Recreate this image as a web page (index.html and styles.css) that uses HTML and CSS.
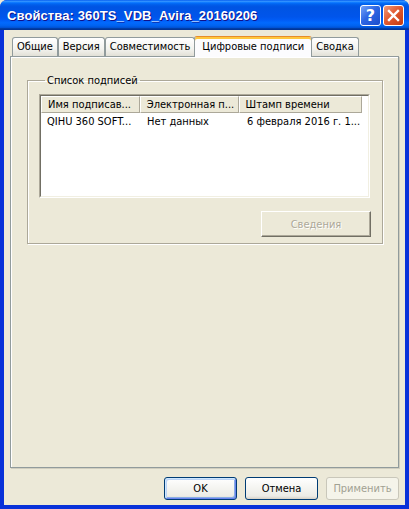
FILE: index.html
```html
<!DOCTYPE html>
<html lang="ru">
<head>
    <meta charset="UTF-8">
    <meta name="viewport" content="width=device-width, initial-scale=1.0">
    <title>Свойства: 360TS_VDB_Avira_20160206</title>
    <link rel="stylesheet" href="styles.css">
</head>
<body>
    <div class="window">
        <div class="titlebar">
            <span class="title">Свойства: 360TS_VDB_Avira_20160206</span>
            <div class="caption-buttons">
                <div class="cap-btn help">?</div>
                <div class="cap-btn close">
                    <svg width="13" height="13" viewBox="0 0 13 13">
                        <path d="M2 2 L11 11 M11 2 L2 11" stroke="#fff" stroke-width="2.4" stroke-linecap="square"/>
                    </svg>
                </div>
            </div>
        </div>
        <div class="frame">
            <div class="tabs">
                <div class="tab">Общие</div>
                <div class="tab">Версия</div>
                <div class="tab">Совместимость</div>
                <div class="tab active">Цифровые подписи</div>
                <div class="tab">Сводка</div>
            </div>
            <div class="panel">
                <fieldset class="group">
                    <legend>Список подписей</legend>
                    <div class="listview">
                        <div class="lv-inner">
                            <div class="lv-header">
                                <div class="col col1">Имя подписав...</div>
                                <div class="col col2">Электронная п...</div>
                                <div class="col col3">Штамп времени</div>
                                <div class="col filler"></div>
                            </div>
                            <div class="lv-row">
                                <div class="cell col1">QIHU 360 SOFT...</div>
                                <div class="cell col2">Нет данных</div>
                                <div class="cell col3">6 февраля 2016 г. 1...</div>
                            </div>
                        </div>
                    </div>
                    <div class="group-actions">
                        <button class="classic-btn" disabled>Сведения</button>
                    </div>
                </fieldset>
            </div>
            <div class="footer">
                <button class="xp-btn default">OK</button>
                <button class="xp-btn">Отмена</button>
                <button class="xp-btn" disabled>Применить</button>
            </div>
        </div>
    </div>
</body>
</html>
```

FILE: styles.css
```css
body {
    margin: 0;
    background: #ece9d8;
    font-family: "DejaVu Sans Condensed", "Liberation Sans", sans-serif;
    font-size: 11px;
    color: #000;
}
.window {
    width: 409px;
    height: 509px;
    display: flex;
    flex-direction: column;
    background: #0831d9;
    border-radius: 7px 7px 0 0;
    overflow: hidden;
}
.titlebar {
    height: 30px;
    flex-shrink: 0;
    display: flex;
    align-items: center;
    justify-content: space-between;
    padding: 0 5px 0 7px;
    box-sizing: border-box;
    background: linear-gradient(to bottom, #0058ee 0%, #3593ff 4%, #288eff 6%, #127dff 8%, #036ffc 10%, #0262ee 14%, #0057e5 20%, #0054e3 24%, #0055eb 56%, #005bf5 66%, #026afe 76%, #0062ef 86%, #0052d6 92%, #0040ab 94%, #003092 100%);
}
.title {
    color: #fff;
    font-family: "Liberation Sans", sans-serif;
    font-weight: bold;
    font-size: 13px;
    letter-spacing: 0.1px;
    text-shadow: 1px 1px #0f1089;
    padding-top: 1px;
}
.caption-buttons {
    display: flex;
    gap: 2px;
    padding-top: 1px;
}
.cap-btn {
    width: 19px;
    height: 19px;
    border: 1px solid #fff;
    border-radius: 3px;
    display: flex;
    align-items: center;
    justify-content: center;
    color: #fff;
}
.help {
    background: linear-gradient(135deg, #74a2f7 0%, #2d66e4 45%, #1c4ccb 100%);
    font-family: "DejaVu Sans", sans-serif;
    font-weight: bold;
    font-size: 16px;
}
.close {
    background: linear-gradient(135deg, #f09a7c 0%, #e25b32 45%, #c43a10 100%);
}
.frame {
    flex: 1;
    display: flex;
    flex-direction: column;
    background: #ece9d8;
    margin: 0 4px 4px;
    padding: 5px 6px 0 6px;
}
.tabs {
    display: flex;
    align-items: flex-end;
    height: 21px;
    padding-left: 2px;
}
.tab {
    height: 18px;
    line-height: 18px;
    padding: 0 4px;
    border: 1px solid #919b9c;
    border-bottom: none;
    border-radius: 3px 3px 0 0;
    background: linear-gradient(#fff, #f3f3ef 60%, #e2e0d6);
    white-space: nowrap;
}
.tab.active {
    height: 20px;
    line-height: 20px;
    padding: 0 7px;
    margin: 0 -1px -1px -1px;
    border-top: 1px solid #e68b2c;
    box-shadow: inset 0 2px #ffc73c;
    background: #fcfcfe;
    position: relative;
    z-index: 1;
}
.panel {
    flex: 1;
    border: 1px solid #919b9c;
    box-shadow: inset 1px 1px #fff, 1px 1px 0 #d0cebf;
    display: flex;
    flex-direction: column;
}
.group {
    box-sizing: border-box;
    width: 356px;
    margin: 17px 0 0 16px;
    padding: 7px 11px 6px 11px;
    border: 1px solid #aca899;
    box-shadow: inset 1px 1px #fff, 1px 1px #fff;
}
.group legend {
    padding: 0 2px;
    margin-left: 6px;
    line-height: 13px;
}
.listview {
    box-sizing: border-box;
    width: 331px;
    height: 104px;
    border: 1px solid;
    border-color: #aca899 #fff #fff #aca899;
}
.lv-inner {
    height: 100%;
    box-sizing: border-box;
    border: 1px solid;
    border-color: #716f64 #f1efe2 #f1efe2 #716f64;
    background: #fff;
}
.lv-header {
    display: flex;
    height: 17px;
}
.lv-header .col {
    box-sizing: border-box;
    line-height: 15px;
    padding-left: 6px;
    background: #ece9d8;
    border-top: 1px solid #fff;
    border-left: 1px solid #fff;
    border-bottom: 1px solid #aca899;
    border-right: 1px solid #aca899;
    white-space: nowrap;
    overflow: hidden;
}
.col1 { width: 100px; }
.col2 { width: 100px; }
.col3 { width: 125px; }
.lv-header .filler {
    flex: 1;
    background: #fff;
    border: none;
}
.lv-row {
    display: flex;
    height: 16px;
    line-height: 16px;
    margin-top: 1px;
}
.lv-row .cell {
    padding-left: 6px;
    box-sizing: border-box;
    white-space: nowrap;
}
.group-actions {
    display: flex;
    justify-content: flex-end;
    margin-top: 13px;
}
.classic-btn {
    width: 110px;
    height: 26px;
    font: inherit;
    background: #ece9d8;
    border: 1px solid;
    border-color: #fff #716f64 #716f64 #fff;
    box-shadow: inset -1px -1px #aca899;
    color: #aca899;
    text-shadow: 1px 1px #fff;
}
.footer {
    display: flex;
    justify-content: flex-end;
    gap: 8px;
    padding: 9px 0 5px;
}
.xp-btn {
    width: 73px;
    height: 23px;
    font: inherit;
    color: #000;
    border: 1px solid #003c74;
    border-radius: 3px;
    background: linear-gradient(#fff, #f4f4f0 50%, #ecebe6 86%, #d6d0c5);
    padding: 0;
}
.xp-btn.default {
    box-shadow: inset 1px 1px #cee7ff, inset -1px -1px #6982ee, inset 2px 2px #bcd4f6, inset -2px -2px #89ade4;
}
.xp-btn:disabled {
    border-color: #c9c7ba;
    background: #f5f4ea;
    color: #a1a192;
}
```
